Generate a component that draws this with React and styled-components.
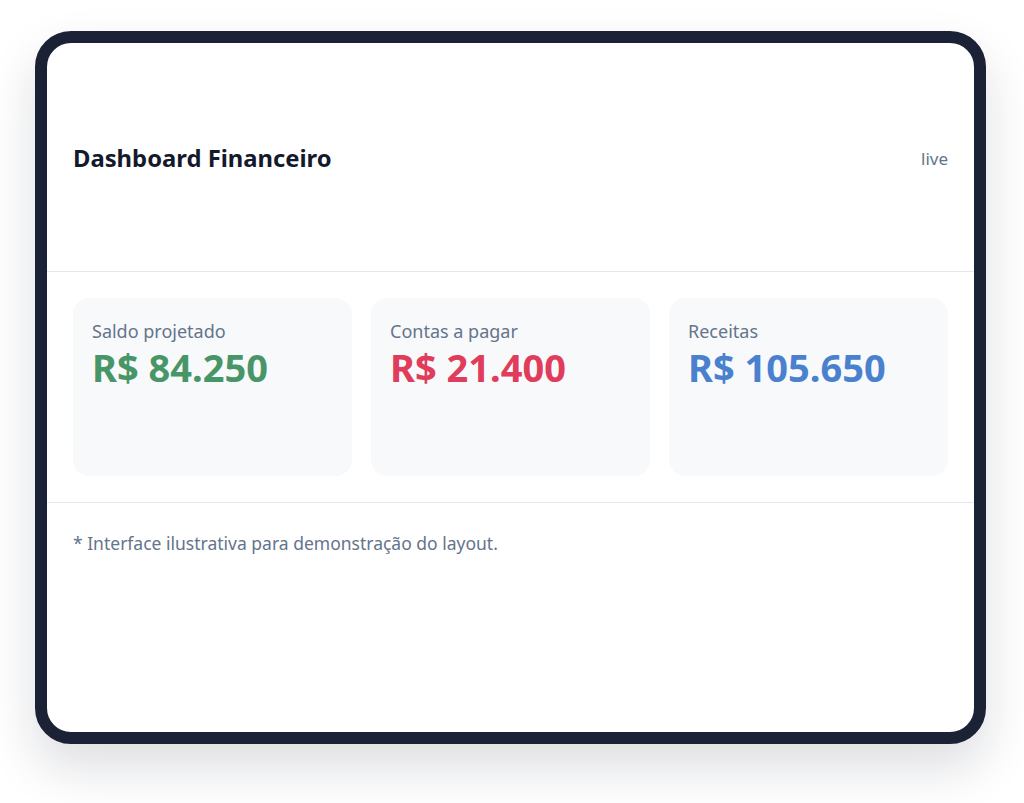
import React from 'react';
import styled, { createGlobalStyle } from 'styled-components';

const GlobalStyle = createGlobalStyle`
  * { box-sizing: border-box; }
  body {
    margin: 0;
    background: #fff;
    font-family: "Segoe UI", "Noto Sans", "Liberation Sans", sans-serif;
  }
`;

const Page = styled.div`
  min-height: 803px;
  padding: 31px 0 0 35px;
`;

const Device = styled.div`
  width: 951px;
  height: 713px;
  border: 12px solid #1c2235;
  border-radius: 36px;
  background: #fff;
  overflow: hidden;
  display: flex;
  flex-direction: column;
  box-shadow: 0 24px 50px rgba(15, 23, 42, 0.14);
`;

const Header = styled.header`
  height: 229px;
  padding: 2px 26px 0;
  display: flex;
  align-items: center;
  justify-content: space-between;
  border-bottom: 1px solid #e5e7ef;
`;

const Title = styled.h1`
  margin: 0;
  font-size: 23.8px;
  font-weight: 700;
  color: #141a2c;
`;

const Status = styled.span`
  font-size: 17px;
  color: #64748b;
`;

const CardRow = styled.section`
  display: grid;
  grid-template-columns: repeat(3, 1fr);
  gap: 19px;
  padding: 26px;
  border-bottom: 1px solid #e5e7ef;
`;

const Card = styled.div`
  height: 178px;
  background: #f8f9fb;
  border-radius: 16px;
  padding: 21px 19px;
`;

const Label = styled.div`
  font-size: 18px;
  color: #64748b;
  line-height: 24px;
`;

const Value = styled.div`
  margin-top: 0;
  font-size: 38px;
  font-weight: 700;
  line-height: 48px;
  color: ${(p) => p.$color};
`;

const Footer = styled.footer`
  padding: 28px 26px;
  font-size: 17.5px;
  color: #64748b;
`;

const cards = [
  { label: 'Saldo projetado', value: 'R$ 84.250', color: '#489668' },
  { label: 'Contas a pagar', value: 'R$ 21.400', color: '#e03c5c' },
  { label: 'Receitas', value: 'R$ 105.650', color: '#4a81cf' },
];

const App = () => {
  return (
    <Page>
      <GlobalStyle />
      <Device>
        <Header>
          <Title>Dashboard Financeiro</Title>
          <Status>live</Status>
        </Header>
        <CardRow>
          {cards.map((c) => (
            <Card key={c.label}>
              <Label>{c.label}</Label>
              <Value $color={c.color}>{c.value}</Value>
            </Card>
          ))}
        </CardRow>
        <Footer>* Interface ilustrativa para demonstração do layout.</Footer>
      </Device>
    </Page>
  );
};

export default App;
